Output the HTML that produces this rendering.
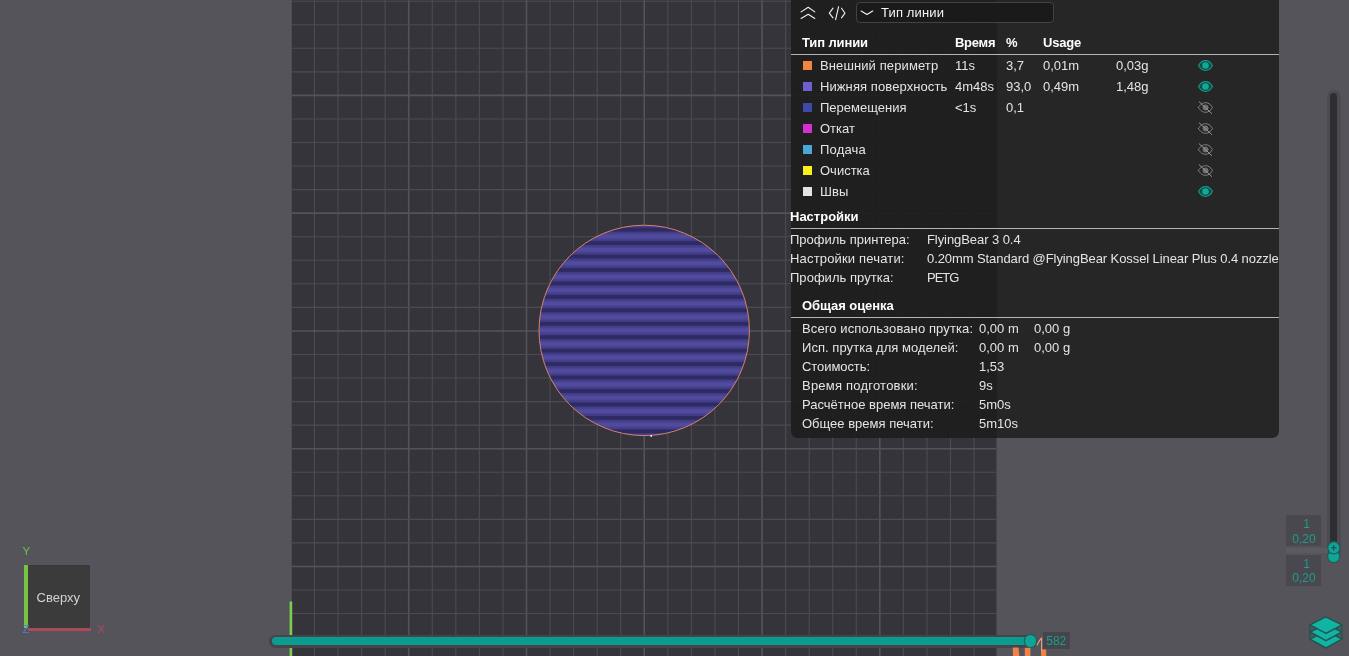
<!DOCTYPE html>
<html lang="ru">
<head>
<meta charset="utf-8">
<title>Предпросмотр нарезки</title>
<style>
html,body{margin:0;padding:0}
body{width:1349px;height:656px;overflow:hidden;background:#55545a;position:relative;font-family:"Liberation Sans",sans-serif;font-size:13px;color:#e4e4e4}
.abs{position:absolute}
.t{position:absolute;white-space:nowrap;line-height:16px;height:16px;transform-origin:0 50%}
.b{font-weight:700;color:#fff}
#panel{position:absolute;left:790.6px;top:-10px;width:488.4px;height:447.8px;border-radius:0 0 6.5px 6.5px;overflow:hidden}
#panel .pl{position:absolute;left:0;top:0;width:206.4px;height:100%;background:rgba(31,31,31,0.95)}
#panel .pr{position:absolute;left:206.4px;top:0;right:0;height:100%;background:rgba(36,36,36,0.96)}
.hr{position:absolute;height:1px;background:#b4b4b4}
.sw{position:absolute;width:9px;height:9px;left:803px}
.teal{color:#1aa796}
.lbl{position:absolute;background:#49484e;color:#1f9c8e;text-align:center;font-size:12px;line-height:14.6px}
</style>
</head>
<body>
<svg width="1349" height="656" viewBox="0 0 1349 656" style="position:absolute;left:0;top:0">
<defs>
<linearGradient id="lg" x1="0" y1="0" x2="0" y2="1">
<stop offset="0" stop-color="#524c9f"/>
<stop offset="0.12" stop-color="#504a9c"/>
<stop offset="0.20" stop-color="#45408e"/>
<stop offset="0.325" stop-color="#403c86"/>
<stop offset="0.365" stop-color="#2e2a62"/>
<stop offset="0.635" stop-color="#2e2a62"/>
<stop offset="0.675" stop-color="#403c86"/>
<stop offset="0.80" stop-color="#45408e"/>
<stop offset="0.88" stop-color="#504a9c"/>
<stop offset="1" stop-color="#524c9f"/>
</linearGradient>
<pattern id="st" x="0" y="330.5" width="300" height="13.45" patternUnits="userSpaceOnUse"><rect x="0" y="0" width="300" height="13.45" fill="url(#lg)"/></pattern>
</defs>
<rect x="291.8" y="-5" width="704.70" height="666" fill="#35343a"/>
<line x1="314.50" y1="0" x2="314.50" y2="656" stroke="#4c4b53" stroke-width="1.1"/>
<line x1="338.06" y1="0" x2="338.06" y2="656" stroke="#4c4b53" stroke-width="1.1"/>
<line x1="361.62" y1="0" x2="361.62" y2="656" stroke="#4c4b53" stroke-width="1.1"/>
<line x1="385.17" y1="0" x2="385.17" y2="656" stroke="#4c4b53" stroke-width="1.1"/>
<line x1="408.73" y1="0" x2="408.73" y2="656" stroke="#54535b" stroke-width="1.6"/>
<line x1="432.28" y1="0" x2="432.28" y2="656" stroke="#4c4b53" stroke-width="1.1"/>
<line x1="455.83" y1="0" x2="455.83" y2="656" stroke="#4c4b53" stroke-width="1.1"/>
<line x1="479.39" y1="0" x2="479.39" y2="656" stroke="#4c4b53" stroke-width="1.1"/>
<line x1="502.94" y1="0" x2="502.94" y2="656" stroke="#4c4b53" stroke-width="1.1"/>
<line x1="526.50" y1="0" x2="526.50" y2="656" stroke="#54535b" stroke-width="1.6"/>
<line x1="550.06" y1="0" x2="550.06" y2="656" stroke="#4c4b53" stroke-width="1.1"/>
<line x1="573.61" y1="0" x2="573.61" y2="656" stroke="#4c4b53" stroke-width="1.1"/>
<line x1="597.16" y1="0" x2="597.16" y2="656" stroke="#4c4b53" stroke-width="1.1"/>
<line x1="620.72" y1="0" x2="620.72" y2="656" stroke="#4c4b53" stroke-width="1.1"/>
<line x1="644.27" y1="0" x2="644.27" y2="656" stroke="#54535b" stroke-width="1.6"/>
<line x1="667.83" y1="0" x2="667.83" y2="656" stroke="#4c4b53" stroke-width="1.1"/>
<line x1="691.38" y1="0" x2="691.38" y2="656" stroke="#4c4b53" stroke-width="1.1"/>
<line x1="714.94" y1="0" x2="714.94" y2="656" stroke="#4c4b53" stroke-width="1.1"/>
<line x1="738.50" y1="0" x2="738.50" y2="656" stroke="#4c4b53" stroke-width="1.1"/>
<line x1="762.05" y1="0" x2="762.05" y2="656" stroke="#54535b" stroke-width="1.6"/>
<line x1="785.61" y1="0" x2="785.61" y2="656" stroke="#4c4b53" stroke-width="1.1"/>
<line x1="809.16" y1="0" x2="809.16" y2="656" stroke="#4c4b53" stroke-width="1.1"/>
<line x1="832.71" y1="0" x2="832.71" y2="656" stroke="#4c4b53" stroke-width="1.1"/>
<line x1="856.27" y1="0" x2="856.27" y2="656" stroke="#4c4b53" stroke-width="1.1"/>
<line x1="879.83" y1="0" x2="879.83" y2="656" stroke="#54535b" stroke-width="1.6"/>
<line x1="903.38" y1="0" x2="903.38" y2="656" stroke="#4c4b53" stroke-width="1.1"/>
<line x1="926.93" y1="0" x2="926.93" y2="656" stroke="#4c4b53" stroke-width="1.1"/>
<line x1="950.49" y1="0" x2="950.49" y2="656" stroke="#4c4b53" stroke-width="1.1"/>
<line x1="974.05" y1="0" x2="974.05" y2="656" stroke="#4c4b53" stroke-width="1.1"/>
<line x1="291.8" y1="1.20" x2="996.5" y2="1.20" stroke="#4c4b53" stroke-width="1.1"/>
<line x1="291.8" y1="24.75" x2="996.5" y2="24.75" stroke="#4c4b53" stroke-width="1.1"/>
<line x1="291.8" y1="48.30" x2="996.5" y2="48.30" stroke="#4c4b53" stroke-width="1.1"/>
<line x1="291.8" y1="71.86" x2="996.5" y2="71.86" stroke="#4c4b53" stroke-width="1.1"/>
<line x1="291.8" y1="95.41" x2="996.5" y2="95.41" stroke="#54535b" stroke-width="1.6"/>
<line x1="291.8" y1="118.96" x2="996.5" y2="118.96" stroke="#4c4b53" stroke-width="1.1"/>
<line x1="291.8" y1="142.51" x2="996.5" y2="142.51" stroke="#4c4b53" stroke-width="1.1"/>
<line x1="291.8" y1="166.06" x2="996.5" y2="166.06" stroke="#4c4b53" stroke-width="1.1"/>
<line x1="291.8" y1="189.62" x2="996.5" y2="189.62" stroke="#4c4b53" stroke-width="1.1"/>
<line x1="291.8" y1="213.17" x2="996.5" y2="213.17" stroke="#54535b" stroke-width="1.6"/>
<line x1="291.8" y1="236.72" x2="996.5" y2="236.72" stroke="#4c4b53" stroke-width="1.1"/>
<line x1="291.8" y1="260.27" x2="996.5" y2="260.27" stroke="#4c4b53" stroke-width="1.1"/>
<line x1="291.8" y1="283.82" x2="996.5" y2="283.82" stroke="#4c4b53" stroke-width="1.1"/>
<line x1="291.8" y1="307.38" x2="996.5" y2="307.38" stroke="#4c4b53" stroke-width="1.1"/>
<line x1="291.8" y1="330.93" x2="996.5" y2="330.93" stroke="#54535b" stroke-width="1.6"/>
<line x1="291.8" y1="354.48" x2="996.5" y2="354.48" stroke="#4c4b53" stroke-width="1.1"/>
<line x1="291.8" y1="378.03" x2="996.5" y2="378.03" stroke="#4c4b53" stroke-width="1.1"/>
<line x1="291.8" y1="401.58" x2="996.5" y2="401.58" stroke="#4c4b53" stroke-width="1.1"/>
<line x1="291.8" y1="425.14" x2="996.5" y2="425.14" stroke="#4c4b53" stroke-width="1.1"/>
<line x1="291.8" y1="448.69" x2="996.5" y2="448.69" stroke="#54535b" stroke-width="1.6"/>
<line x1="291.8" y1="472.24" x2="996.5" y2="472.24" stroke="#4c4b53" stroke-width="1.1"/>
<line x1="291.8" y1="495.79" x2="996.5" y2="495.79" stroke="#4c4b53" stroke-width="1.1"/>
<line x1="291.8" y1="519.34" x2="996.5" y2="519.34" stroke="#4c4b53" stroke-width="1.1"/>
<line x1="291.8" y1="542.90" x2="996.5" y2="542.90" stroke="#4c4b53" stroke-width="1.1"/>
<line x1="291.8" y1="566.45" x2="996.5" y2="566.45" stroke="#54535b" stroke-width="1.6"/>
<line x1="291.8" y1="590.00" x2="996.5" y2="590.00" stroke="#4c4b53" stroke-width="1.1"/>
<line x1="291.8" y1="613.55" x2="996.5" y2="613.55" stroke="#4c4b53" stroke-width="1.1"/>
<line x1="291.8" y1="637.10" x2="996.5" y2="637.10" stroke="#4c4b53" stroke-width="1.1"/>
<line x1="291.8" y1="660.66" x2="996.5" y2="660.66" stroke="#4c4b53" stroke-width="1.1"/>
<circle cx="644.2" cy="330.4" r="105.2" fill="url(#st)" stroke="#d9806a" stroke-width="1"/>
<circle cx="651.2" cy="435.9" r="0.9" fill="#fff"/>
<rect x="289.6" y="601.5" width="2.6" height="60" fill="#7ccf4a"/>
</svg>
<div id="ui" style="position:absolute;left:0;top:0;width:1349px;height:656px;will-change:transform">
<div id="panel"><div class="pl"></div><div class="pr"></div></div>

<!-- toolbar -->
<svg class="abs" style="left:795px;top:0" width="90" height="26" viewBox="795 0 90 26" fill="none" stroke="#f2f2f2" stroke-width="1.1" stroke-linecap="round" stroke-linejoin="round">
<path d="M801.1 11.9 L808.2 7.3 L814.8 11.9"/>
<path d="M801.1 18.5 L808.2 14.3 L814.8 18.5"/>
<path d="M833 8.2 L829.3 13.2 L833 17.8"/>
<path d="M838.6 6.7 L835.6 19.6"/>
<path d="M841.5 8.2 L845 13.2 L841.5 17.8"/>
</svg>
<div class="abs" style="left:856px;top:2px;width:196px;height:19px;border:1px solid #424242;border-radius:4px;background:#1a1a1a"></div>
<svg class="abs" style="left:858px;top:6px" width="18" height="12" viewBox="858 6 18 12" fill="none" stroke="#f2f2f2" stroke-width="1.2" stroke-linecap="round" stroke-linejoin="round"><path d="M861.2 11.1 L866.9 14.5 L872.7 11.1"/></svg>
<div class="t" style="left:881px;top:4.5px;color:#f4f4f4;letter-spacing:0.14px">Тип линии</div>

<!-- header -->
<div class="t b" style="left:802px;top:34.5px;letter-spacing:-0.12px">Тип линии</div>
<div class="t b" style="left:955px;top:34.5px;letter-spacing:-0.27px">Время</div>
<div class="t b" style="left:1006px;top:34.5px">%</div>
<div class="t b" style="left:1043px;top:34.5px;letter-spacing:-0.22px">Usage</div>
<div class="hr" style="left:791px;top:54px;width:488px"></div>

<div class="sw" style="top:61.0px;background:#f08642"></div>
<div class="t" style="left:820px;top:57.5px;letter-spacing:0.11px">Внешний периметр</div>
<div class="t" style="left:955px;top:57.5px">11s</div>
<div class="t" style="left:1006px;top:57.5px">3,7</div>
<div class="t" style="left:1043px;top:57.5px">0,01m</div>
<div class="t" style="left:1116px;top:57.5px">0,03g</div>
<svg class="abs" style="left:1197px;top:59.0px" width="17" height="13" viewBox="0 0 17 13"><path d="M1.5 6.5 C3.4 3.1 5.9 1.6 8.5 1.6 C11.1 1.6 13.6 3.1 15.5 6.5 C13.6 9.9 11.1 11.4 8.5 11.4 C5.9 11.4 3.4 9.9 1.5 6.5 Z" fill="#0d4b46" stroke="#13998a" stroke-width="1.05"/><circle cx="8.5" cy="6.5" r="3.3" fill="#12a898"/></svg>
<div class="sw" style="top:82.0px;background:#6c60d0"></div>
<div class="t" style="left:820px;top:78.5px;letter-spacing:0.09px">Нижняя поверхность</div>
<div class="t" style="left:955px;top:78.5px">4m48s</div>
<div class="t" style="left:1006px;top:78.5px">93,0</div>
<div class="t" style="left:1043px;top:78.5px">0,49m</div>
<div class="t" style="left:1116px;top:78.5px">1,48g</div>
<svg class="abs" style="left:1197px;top:80.0px" width="17" height="13" viewBox="0 0 17 13"><path d="M1.5 6.5 C3.4 3.1 5.9 1.6 8.5 1.6 C11.1 1.6 13.6 3.1 15.5 6.5 C13.6 9.9 11.1 11.4 8.5 11.4 C5.9 11.4 3.4 9.9 1.5 6.5 Z" fill="#0d4b46" stroke="#13998a" stroke-width="1.05"/><circle cx="8.5" cy="6.5" r="3.3" fill="#12a898"/></svg>
<div class="sw" style="top:103.0px;background:#3f4aa8"></div>
<div class="t" style="left:820px;top:99.5px;letter-spacing:0px">Перемещения</div>
<div class="t" style="left:955px;top:99.5px">&lt;1s</div>
<div class="t" style="left:1006px;top:99.5px">0,1</div>
<svg class="abs" style="left:1197px;top:101.0px" width="17" height="13" viewBox="0 0 17 13" fill="none" stroke="#858585" stroke-width="1" stroke-linecap="round"><path d="M1.5 6.5 C3.4 3.1 5.9 1.7 8.5 1.7 C11.1 1.7 13.6 3.1 15.5 6.5 C13.6 9.9 11.1 11.3 8.5 11.3 C5.9 11.3 3.4 9.9 1.5 6.5 Z"/><circle cx="8.5" cy="6.5" r="2.5" fill="#6a6a6a" stroke="#7a7a7a"/><path d="M2.2 0.8 L14.6 12.4" stroke="#9a9a9a"/></svg>
<div class="sw" style="top:124.0px;background:#d42fd0"></div>
<div class="t" style="left:820px;top:120.5px;letter-spacing:0px">Откат</div>
<svg class="abs" style="left:1197px;top:122.0px" width="17" height="13" viewBox="0 0 17 13" fill="none" stroke="#858585" stroke-width="1" stroke-linecap="round"><path d="M1.5 6.5 C3.4 3.1 5.9 1.7 8.5 1.7 C11.1 1.7 13.6 3.1 15.5 6.5 C13.6 9.9 11.1 11.3 8.5 11.3 C5.9 11.3 3.4 9.9 1.5 6.5 Z"/><circle cx="8.5" cy="6.5" r="2.5" fill="#6a6a6a" stroke="#7a7a7a"/><path d="M2.2 0.8 L14.6 12.4" stroke="#9a9a9a"/></svg>
<div class="sw" style="top:145.0px;background:#4aa8d8"></div>
<div class="t" style="left:820px;top:141.5px;letter-spacing:0.2px">Подача</div>
<svg class="abs" style="left:1197px;top:143.0px" width="17" height="13" viewBox="0 0 17 13" fill="none" stroke="#858585" stroke-width="1" stroke-linecap="round"><path d="M1.5 6.5 C3.4 3.1 5.9 1.7 8.5 1.7 C11.1 1.7 13.6 3.1 15.5 6.5 C13.6 9.9 11.1 11.3 8.5 11.3 C5.9 11.3 3.4 9.9 1.5 6.5 Z"/><circle cx="8.5" cy="6.5" r="2.5" fill="#6a6a6a" stroke="#7a7a7a"/><path d="M2.2 0.8 L14.6 12.4" stroke="#9a9a9a"/></svg>
<div class="sw" style="top:166.0px;background:#f6f020"></div>
<div class="t" style="left:820px;top:162.5px;letter-spacing:0px">Очистка</div>
<svg class="abs" style="left:1197px;top:164.0px" width="17" height="13" viewBox="0 0 17 13" fill="none" stroke="#858585" stroke-width="1" stroke-linecap="round"><path d="M1.5 6.5 C3.4 3.1 5.9 1.7 8.5 1.7 C11.1 1.7 13.6 3.1 15.5 6.5 C13.6 9.9 11.1 11.3 8.5 11.3 C5.9 11.3 3.4 9.9 1.5 6.5 Z"/><circle cx="8.5" cy="6.5" r="2.5" fill="#6a6a6a" stroke="#7a7a7a"/><path d="M2.2 0.8 L14.6 12.4" stroke="#9a9a9a"/></svg>
<div class="sw" style="top:187.0px;background:#e4e4e4"></div>
<div class="t" style="left:820px;top:183.5px;letter-spacing:0.1px">Швы</div>
<svg class="abs" style="left:1197px;top:185.0px" width="17" height="13" viewBox="0 0 17 13"><path d="M1.5 6.5 C3.4 3.1 5.9 1.6 8.5 1.6 C11.1 1.6 13.6 3.1 15.5 6.5 C13.6 9.9 11.1 11.4 8.5 11.4 C5.9 11.4 3.4 9.9 1.5 6.5 Z" fill="#0d4b46" stroke="#13998a" stroke-width="1.05"/><circle cx="8.5" cy="6.5" r="3.3" fill="#12a898"/></svg>

<div class="t b" style="left:790px;top:208.5px">Настройки</div>
<div class="hr" style="left:791px;top:228px;width:488px"></div>
<div class="t" style="left:790px;top:231.5px">Профиль принтера:</div><div class="t" style="left:927px;top:231.5px;letter-spacing:-0.07px">FlyingBear 3 0.4</div>
<div class="t" style="left:790px;top:250.5px;letter-spacing:0.17px">Настройки печати:</div><div class="t" style="left:927px;top:250.5px;letter-spacing:-0.083px">0.20mm Standard @FlyingBear Kossel Linear Plus 0.4 nozzle</div>
<div class="t" style="left:790px;top:269.5px;letter-spacing:0.03px">Профиль прутка:</div><div class="t" style="left:927px;top:269.5px;letter-spacing:-1.0px">PETG</div>

<div class="t b" style="left:802px;top:297.5px;letter-spacing:-0.07px">Общая оценка</div>
<div class="hr" style="left:791px;top:317px;width:488px"></div>
<div class="t" style="left:802px;top:320.5px;letter-spacing:0.11px">Всего использовано прутка:</div><div class="t" style="left:979px;top:320.5px">0,00 m</div><div class="t" style="left:1034px;top:320.5px">0,00 g</div>
<div class="t" style="left:802px;top:339.5px;letter-spacing:0.05px">Исп. прутка для моделей:</div><div class="t" style="left:979px;top:339.5px">0,00 m</div><div class="t" style="left:1034px;top:339.5px">0,00 g</div>
<div class="t" style="left:802px;top:358.5px;letter-spacing:-0.07px">Стоимость:</div><div class="t" style="left:979px;top:358.5px">1,53</div>
<div class="t" style="left:802px;top:377.5px;letter-spacing:0.22px">Время подготовки:</div><div class="t" style="left:979px;top:377.5px">9s</div>
<div class="t" style="left:802px;top:396.5px">Расчётное время печати:</div><div class="t" style="left:979px;top:396.5px">5m0s</div>
<div class="t" style="left:802px;top:415.5px">Общее время печати:</div><div class="t" style="left:979px;top:415.5px">5m10s</div>

<!-- nav cube -->
<div class="abs" style="left:28px;top:565px;width:62px;height:63px;background:#3b3b3b"></div>
<div class="abs" style="left:24.3px;top:565px;width:3.8px;height:63px;background:#76c442"></div>
<div class="abs" style="left:28px;top:627.7px;width:62.5px;height:3.3px;background:#ad4a5a"></div>
<div class="t" style="left:36.5px;top:589.5px;color:#d2d2d2">Сверху</div>
<div class="t" style="left:22.5px;top:543px;color:#6fc044;font-size:11.5px">Y</div>
<div class="t" style="left:97.5px;top:620.5px;color:#ad4a5a;font-size:11.5px">X</div>
<div class="t" style="left:22.5px;top:620.5px;color:#4a7fe0;font-size:11.5px">Z</div>

<!-- horizontal slider -->
<div class="abs" style="left:269px;top:634.5px;width:768px;height:13px;border-radius:6.5px;background:#45444a"></div>
<div class="abs" style="left:272px;top:637.3px;width:760px;height:7.5px;border-radius:3.75px;background:#0a9d8f"></div>
<div class="abs" style="left:1024.6px;top:635.2px;width:11.4px;height:11.4px;border-radius:50%;background:#0fa596;box-shadow:0 0 0 1.2px #235c58"></div>
<div class="lbl" style="left:1042.5px;top:632.2px;width:27.5px;height:16.7px;line-height:18px;background:#45464c;font-size:12px">582</div>

<!-- vertical slider -->
<div class="abs" style="left:1326.6px;top:89.7px;width:14.2px;height:470px;border-radius:7px;background:#4c4b51"></div>
<div class="abs" style="left:1330px;top:93px;width:7.3px;height:460px;border-radius:3.6px;background:#2e2d32"></div>
<div class="lbl" style="left:1286px;top:515px;width:34px;height:29px;padding-top:2px;padding-left:1px;box-sizing:content-box"><span style="position:relative;left:2.5px">1</span><br>0,20</div>
<div class="lbl" style="left:1286px;top:554.5px;width:34px;height:29.5px;padding-top:2px;padding-left:1px;box-sizing:content-box"><span style="position:relative;left:2.5px">1</span><br>0,20</div>
<div class="abs" style="left:1286px;top:547.5px;width:42px;height:5.5px;background:#5b5a60"></div>
<svg class="abs" style="left:1322px;top:538px" width="24" height="30" viewBox="1322 538 24 30">
<circle cx="1333.7" cy="556.6" r="6.1" fill="#0fa596" stroke="#225c57" stroke-width="1.2"/>
<circle cx="1333.8" cy="547.8" r="6.1" fill="#0fa596" stroke="#225c57" stroke-width="1.2"/>
<path d="M1331 547.8 H1336.6 M1333.8 545 V550.6" stroke="#1d4644" stroke-width="1" fill="none"/>
</svg>
<svg class="abs" style="left:1305px;top:612px" width="42" height="42" viewBox="1305 612 42 42" stroke="#1e5652" stroke-width="1.5" stroke-linejoin="round" fill="#12b3a2">
<path d="M1309.8 624.8 V639.2 M1342 624.8 V639.2" fill="none" stroke-width="1.3"/>
<path d="M1310 639.2 L1326 631.2 L1342 639.2 L1326 648 Z"/>
<path d="M1310 632 L1326 624 L1342 632 L1326 640.6 Z"/>
<path d="M1310 624.8 L1325.8 616.9 L1342 624.8 L1326 633.4 Z"/>
</svg>
<svg class="abs" style="left:1008px;top:632px" width="44" height="24" viewBox="1008 632 44 24">
<path d="M1012.7 647.6 H1018.5 L1019.3 656 H1013 Z" fill="#f08248"/>
<path d="M1024.8 647.8 H1030.4 V656 H1024.8 Z" fill="#f08248"/>
<path d="M1041 649.4 H1046.2 V656 H1041 Z" fill="#f08248"/>
<path d="M1037 645.3 C1038.3 642.5 1040 639.3 1041.6 638.2 L1041.6 651" fill="none" stroke="#f2a484" stroke-width="1.1"/>
</svg>
</div>
</body>
</html>
